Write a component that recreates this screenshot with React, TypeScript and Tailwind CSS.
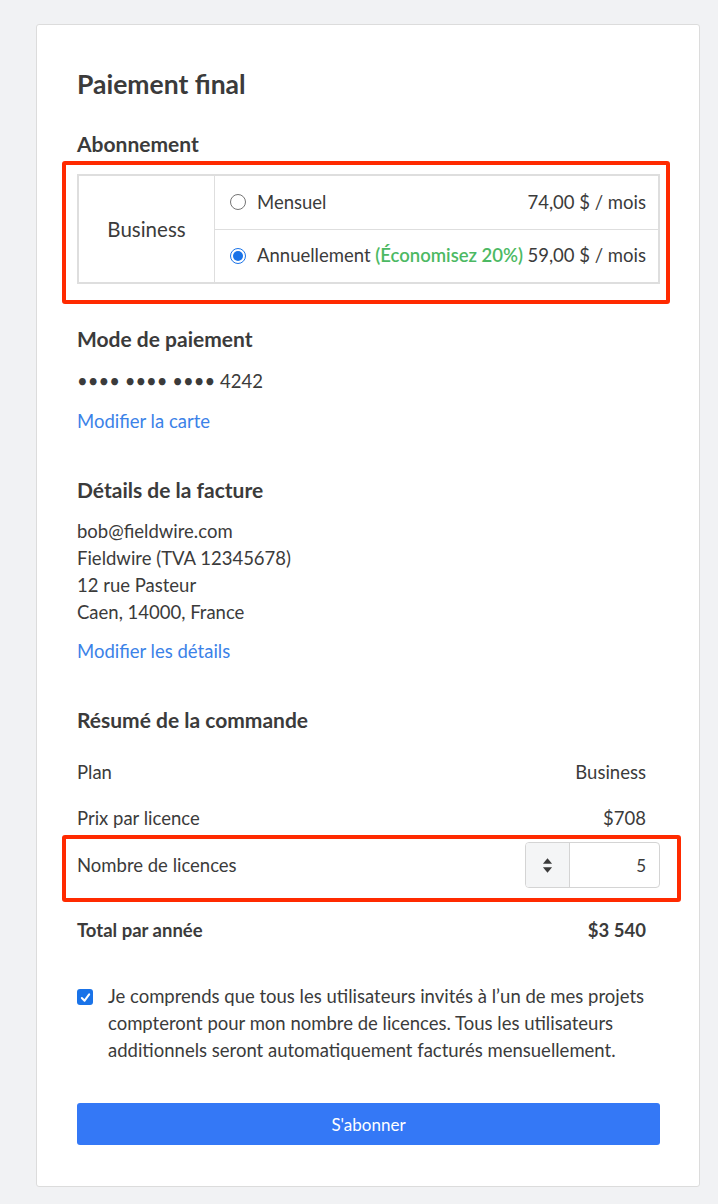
import React from "react";

const font = { fontFamily: "Lato, 'Noto Sans', sans-serif" };

function Radio({ checked }: { checked?: boolean }) {
  return checked ? (
    <span className="flex h-[16px] w-[16px] items-center justify-center rounded-full border border-[#1a73e8] bg-white">
      <span className="h-[10px] w-[10px] rounded-full bg-[#1a73e8]" />
    </span>
  ) : (
    <span className="h-[16px] w-[16px] rounded-full border border-[#757575] bg-white" />
  );
}

function Row({ label, value, bold }: { label: string; value: string; bold?: boolean }) {
  return (
    <div className={`flex h-[46px] items-center justify-between pr-[14px] ${bold ? "font-bold" : ""}`}>
      <span>{label}</span>
      <span>{value}</span>
    </div>
  );
}

export default function App() {
  return (
    <div className="min-h-[1204px] bg-[#f1f2f4] pl-[36px] pr-[18px] pt-[24px] pb-[17px] text-[18.5px] leading-[27px] text-[#3b3b3b]" style={font}>
      <div className="rounded-[3px] border border-[#dcdcdc] bg-white pl-[40px] pr-[39px] pt-[42px] pb-[41px]">
        <h1 className="text-[26.5px] leading-[34px] font-bold">Paiement final</h1>

        <h2 className="mt-[29px] text-[21px] leading-[28px] font-bold">Abonnement</h2>
        <div className="relative mt-[16px]">
          <div className="pointer-events-none absolute -top-[13px] -bottom-[20px] -left-[15px] -right-[10px] rounded-[3px] border-[4px] border-[#ff2a00]" />
          <div className="flex h-[110px] border-2 border-[#dedede]">
            <div className="flex w-[136px] items-center justify-center border-r border-[#dedede] text-[20.5px]">Business</div>
            <div className="flex flex-1 flex-col">
              <div className="flex flex-1 items-center justify-between border-b border-[#dedede] pl-[15px] pr-[12px]">
                <div className="flex items-center gap-[11px]">
                  <Radio />
                  <span>Mensuel</span>
                </div>
                <span>74,00 $ / mois</span>
              </div>
              <div className="flex flex-1 items-center justify-between pl-[15px] pr-[12px]">
                <div className="flex items-center gap-[11px]">
                  <Radio checked />
                  <span>
                    Annuellement <span className="font-semibold text-[#4cb963]">(Économisez 20%)</span>
                  </span>
                </div>
                <span>59,00 $ / mois</span>
              </div>
            </div>
          </div>
        </div>

        <h2 className="mt-[41px] text-[21px] leading-[28px] font-bold">Mode de paiement</h2>
        <p className="mt-[15px]">•••• •••• •••• 4242</p>
        <a className="mt-[13px] block text-[#3b82e8]">Modifier la carte</a>

        <h2 className="mt-[41px] text-[21px] leading-[28px] font-bold">Détails de la facture</h2>
        <div className="mt-[14px]">
          <p>bob@fieldwire.com</p>
          <p>Fieldwire (TVA 12345678)</p>
          <p>12 rue Pasteur</p>
          <p>Caen, 14000, France</p>
        </div>
        <a className="mt-[12px] block text-[#3b82e8]">Modifier les détails</a>

        <h2 className="mt-[41px] text-[21px] leading-[28px] font-bold">Résumé de la commande</h2>
        <div className="mt-[15px]">
          <Row label="Plan" value="Business" />
          <Row label="Prix par licence" value="$708" />
          <div className="relative mt-[1px] flex h-[46px] items-center justify-between">
            <div className="pointer-events-none absolute -top-[7px] -bottom-[14px] -left-[15px] -right-[21px] rounded-[3px] border-[4px] border-[#ff2a00]" />
            <span>Nombre de licences</span>
            <div className="flex h-[46px] w-[135px] overflow-hidden rounded-[4px] border border-[#d4d4d4]">
              <div className="flex w-[44px] items-center justify-center border-r border-[#d4d4d4] bg-[#f4f5f6]">
                <svg width="11" height="17" viewBox="0 0 12 18">
                  <path d="M6 1 L11 7 H1 Z" fill="#3b3b3b" />
                  <path d="M6 17 L11 11 H1 Z" fill="#3b3b3b" />
                </svg>
              </div>
              <div className="flex flex-1 items-center justify-end pr-[13px] text-[17px]">5</div>
            </div>
          </div>
          <div className="mt-[19px]">
            <Row label="Total par année" value="$3 540" bold />
          </div>
        </div>

        <div className="mt-[30px] flex items-start gap-[15px]">
          <span className="mt-[6px] flex h-[16px] w-[16px] shrink-0 items-center justify-center rounded-[3px] bg-[#1a73e8]">
            <svg width="11" height="11" viewBox="0 0 12 12">
              <path d="M2 6.5 L5 9.5 L10 2.5" stroke="white" strokeWidth="2.2" fill="none" strokeLinecap="round" strokeLinejoin="round" />
            </svg>
          </span>
          <p>
            Je comprends que tous les utilisateurs invités à l’un de mes projets compteront pour mon nombre de licences. Tous les utilisateurs additionnels seront automatiquement facturés mensuellement.
          </p>
        </div>

        <button className="mt-[39px] h-[42px] w-full rounded-[3px] bg-[#3478f6] text-[17px] text-white">S'abonner</button>
      </div>
    </div>
  );
}
